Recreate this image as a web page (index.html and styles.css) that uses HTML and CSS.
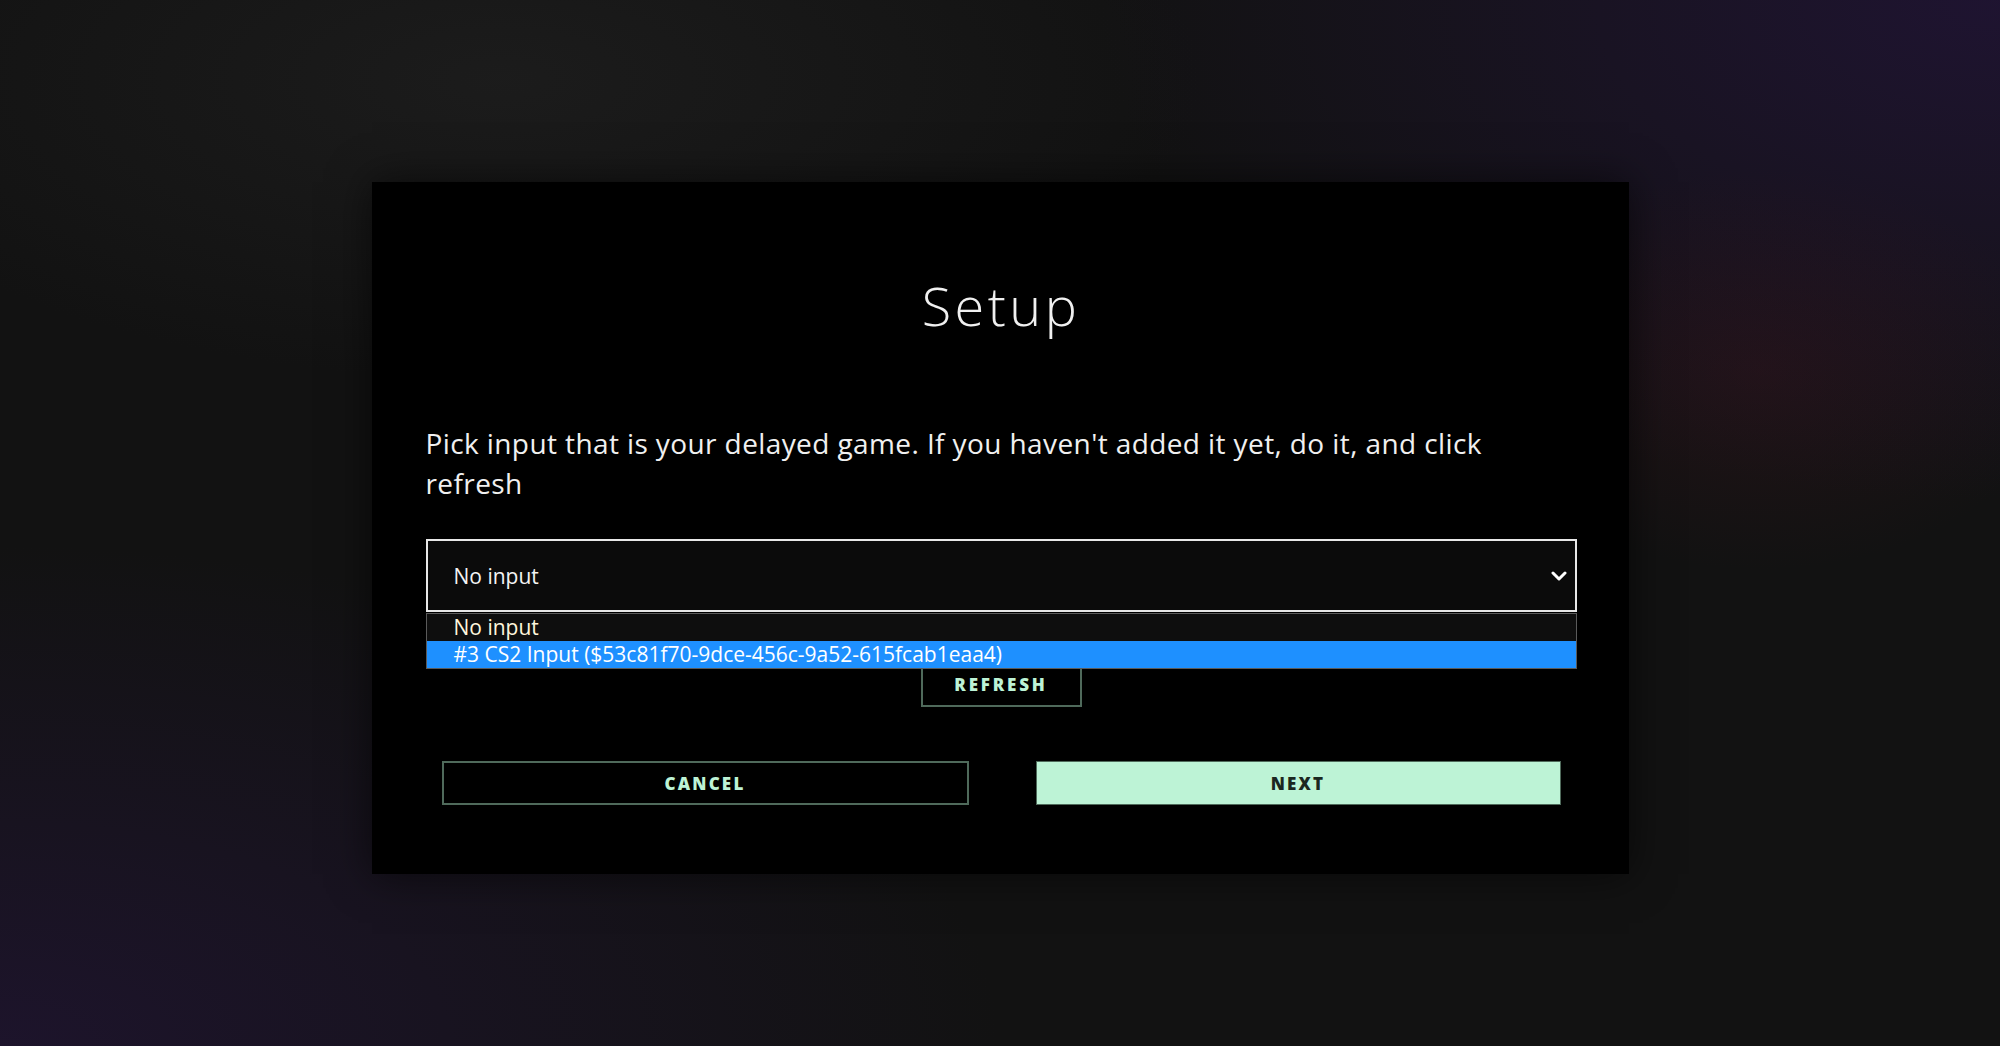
FILE: index.html
```html
<!DOCTYPE html>
<html lang="en">
<head>
<meta charset="utf-8">
<title>Setup</title>
<link rel="stylesheet" href="styles.css">
</head>
<body>
<div class="backdrop">
  <div class="modal">
    <h1 class="title">Setup</h1>
    <p class="desc">Pick input that is your delayed game. If you haven't added it yet, do it, and click refresh</p>
    <div class="select-wrap">
      <div class="select">
        <span class="select-value">No input</span>
        <svg class="chevron" width="16" height="10" viewBox="0 0 16 10"><path d="M2 2 L8 8 L14 2" fill="none" stroke="#ffffff" stroke-width="3" stroke-linecap="round" stroke-linejoin="round"/></svg>
      </div>
      <div class="dropdown">
        <div class="option option-current">No input</div>
        <div class="option option-active">#3 CS2 Input ($53c81f70-9dce-456c-9a52-615fcab1eaa4)</div>
      </div>
    </div>
    <div class="refresh-row">
      <button class="btn-refresh">REFRESH</button>
    </div>
    <div class="actions">
      <button class="btn btn-cancel">CANCEL</button>
      <button class="btn btn-next">NEXT</button>
    </div>
  </div>
</div>
</body>
</html>
```

FILE: styles.css
```css
* { box-sizing: border-box; }
html, body { margin: 0; padding: 0; }
body {
  width: 2000px;
  height: 1046px;
  overflow: hidden;
  font-family: "Open Sans", "Noto Sans", sans-serif;
  color: #f2f2f2;
}
.backdrop {
  width: 2000px;
  height: 1046px;
  padding-top: 182px;
  display: flex;
  justify-content: center;
  align-items: flex-start;
  background:
    radial-gradient(ellipse 300px 200px at 1760px 370px, rgba(60,20,30,0.35), transparent),
    radial-gradient(ellipse 900px 500px at 2000px 0px, rgba(32,20,52,0.9), transparent),
    radial-gradient(ellipse 1000px 500px at 0px 1046px, rgba(30,20,46,0.9), transparent),
    radial-gradient(ellipse 700px 300px at 500px 80px, rgba(30,30,30,0.8), transparent),
    #121212;
}
.modal {
  width: 1257px;
  height: 692px;
  background: #000;
  padding: 0 52px 0 54px;
  box-shadow: 0 0 40px rgba(0,0,0,0.6);
}
.title {
  margin: 0;
  padding-top: 91px;
  font-size: 54px;
  font-weight: 300;
  line-height: 64px;
  text-align: center;
  color: #f0f0f0;
  letter-spacing: 3.5px;
}
.desc {
  margin: 86px 0 0 0;
  max-width: 1100px;
  font-size: 28px;
  line-height: 40px;
  color: #f0f0f0;
  letter-spacing: 0.4px;
}
.select-wrap {
  position: relative;
  margin-top: 36px;
}
.select {
  height: 73px;
  border: 2px solid #e8e8e8;
  background: #0b0b0b;
  display: flex;
  align-items: center;
  justify-content: space-between;
  padding: 0 8px 0 26px;
}
.select-value {
  font-size: 21px;
  color: #f4f4f4;
}
.chevron { display: block; }
.dropdown {
  position: absolute;
  left: 0;
  right: 0;
  top: 74px;
  border: 1px solid #5a5a5a;
  background: #0e0e0e;
  z-index: 2;
}
.option {
  height: 27px;
  line-height: 27px;
  padding-left: 27px;
  font-size: 21px;
  white-space: nowrap;
}
.option-current { color: #fff6dc; }
.option-active { background: #1e90ff; color: #ffffff; }
.refresh-row {
  display: flex;
  justify-content: center;
  margin-top: 49px;
}
.btn-refresh {
  width: 161px;
  height: 46px;
  background: #000;
  border: 2px solid #4f6a5b;
  color: #bdf3d6;
  font-family: "Open Sans", "Noto Sans", sans-serif;
  font-weight: 800;
  font-size: 17px;
  letter-spacing: 2.8px;
  padding: 0;
}
.actions {
  display: flex;
  gap: 67px;
  padding: 0 16px;
  margin-top: 54px;
}
.btn {
  flex: 1;
  height: 44px;
  font-family: "Open Sans", "Noto Sans", sans-serif;
  font-weight: 800;
  font-size: 17px;
  letter-spacing: 2.2px;
  padding: 0;
}
.btn-cancel {
  background: #000;
  border: 2px solid #4f6a5b;
  color: #bdf3d6;
}
.btn-next {
  background: #bdf3d6;
  border: 1px solid #4f6a5b;
  color: #1b2620;
}
```
